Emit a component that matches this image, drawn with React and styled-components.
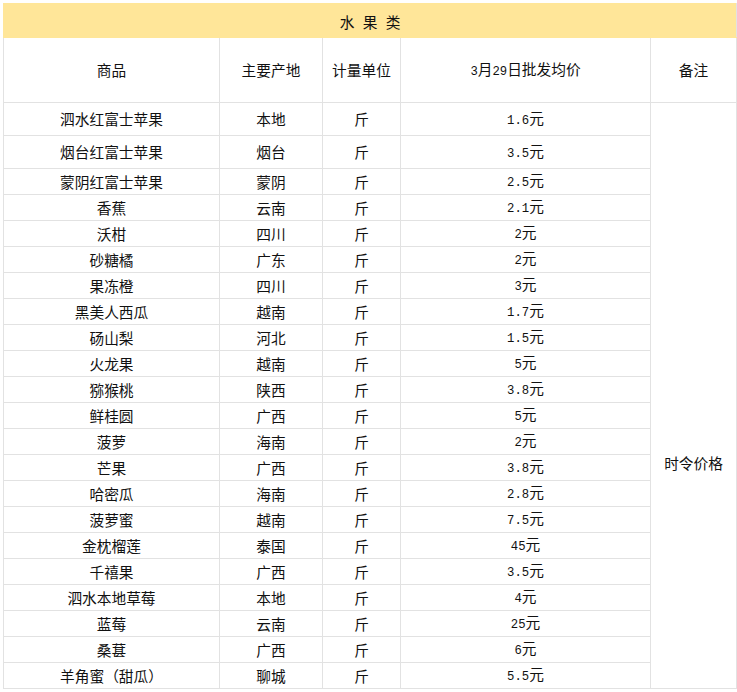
import React from "react";
import styled, { createGlobalStyle } from "styled-components";

const GlobalStyle = createGlobalStyle`
  html, body {
    margin: 0;
    padding: 0;
    background: #ffffff;
  }
  body {
    font-family: "Noto Sans CJK SC", "Noto Sans", sans-serif;
    color: #111111;
  }
`;

const Sheet = styled.div`
  width: 737px;
  height: 692px;
  overflow: hidden;
  box-sizing: border-box;
  padding: 3px 0 0 3px;
  background: #ffffff;
`;

const Table = styled.table`
  border-collapse: collapse;
  table-layout: fixed;
  width: 733px;
  font-size: 14.7px;
  line-height: 18px;
`;

const Col = styled.col`
  width: ${(p) => p.$w}px;
`;

const Row = styled.tr`
  height: ${(p) => p.$h}px;
`;

const TitleCell = styled.th`
  padding: 3px 0 0;
  background: #ffe699;
  font-weight: 400;
  text-align: center;
  vertical-align: middle;
  word-spacing: 5px;
  border: 1px solid #ffe699;
  border-right-color: #e2e2e2;
`;

const HeadCell = styled.th`
  padding: 0;
  font-weight: 400;
  text-align: center;
  vertical-align: middle;
  border: 1px solid #e2e2e2;
  white-space: nowrap;
`;

const Cell = styled.td`
  padding: 0;
  text-align: center;
  vertical-align: middle;
  border: 1px solid #e2e2e2;
  white-space: nowrap;
`;

const NoteCell = styled.td`
  padding: 351px 0 0;
  text-align: center;
  vertical-align: top;
  border: 1px solid #e2e2e2;
  white-space: nowrap;
`;

const Num = styled.span`
  font-family: "Liberation Mono", monospace;
  font-size: 12.25px;
`;

const rows = [
  ["泗水红富士苹果", "本地", "1.6", 33],
  ["烟台红富士苹果", "烟台", "3.5", 33],
  ["蒙阴红富士苹果", "蒙阴", "2.5", 26],
  ["香蕉", "云南", "2.1", 26],
  ["沃柑", "四川", "2", 26],
  ["砂糖橘", "广东", "2", 26],
  ["果冻橙", "四川", "3", 26],
  ["黑美人西瓜", "越南", "1.7", 26],
  ["砀山梨", "河北", "1.5", 26],
  ["火龙果", "越南", "5", 26],
  ["猕猴桃", "陕西", "3.8", 26],
  ["鲜桂圆", "广西", "5", 26],
  ["菠萝", "海南", "2", 26],
  ["芒果", "广西", "3.8", 26],
  ["哈密瓜", "海南", "2.8", 26],
  ["菠萝蜜", "越南", "7.5", 26],
  ["金枕榴莲", "泰国", "45", 26],
  ["千禧果", "广西", "3.5", 26],
  ["泗水本地草莓", "本地", "4", 26],
  ["蓝莓", "云南", "25", 26],
  ["桑葚", "广西", "6", 26],
  ["羊角蜜（甜瓜）", "聊城", "5.5", 26],
];

export default function App() {
  return (
    <>
      <GlobalStyle />
      <Sheet>
        <Table>
          <colgroup>
            <Col $w={216} />
            <Col $w={103} />
            <Col $w={78} />
            <Col $w={250} />
            <Col $w={86} />
          </colgroup>
          <thead>
            <Row $h={34}>
              <TitleCell colSpan={5}>水 果 类</TitleCell>
            </Row>
            <Row $h={65}>
              <HeadCell>商品</HeadCell>
              <HeadCell>主要产地</HeadCell>
              <HeadCell>计量单位</HeadCell>
              <HeadCell>
                <Num>3</Num>月<Num>29</Num>日批发均价
              </HeadCell>
              <HeadCell>备注</HeadCell>
            </Row>
          </thead>
          <tbody>
            {rows.map(([name, origin, price, h], i) => (
              <Row key={name} $h={h}>
                <Cell>{name}</Cell>
                <Cell>{origin}</Cell>
                <Cell>斤</Cell>
                <Cell>
                  <Num>{price}</Num>元
                </Cell>
                {i === 0 && <NoteCell rowSpan={rows.length}>时令价格</NoteCell>}
              </Row>
            ))}
          </tbody>
        </Table>
      </Sheet>
    </>
  );
}
